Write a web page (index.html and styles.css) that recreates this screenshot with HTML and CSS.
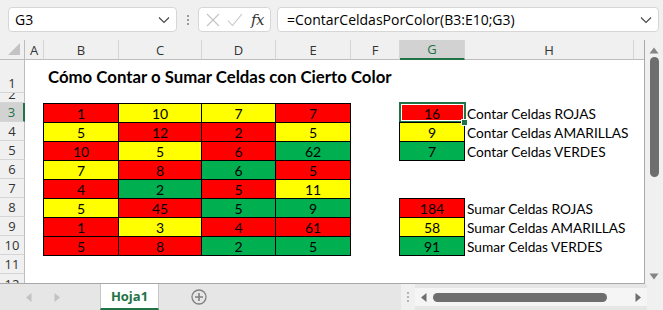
FILE: index.html
```html
<!DOCTYPE html>
<html lang="es">
<head>
    <meta charset="UTF-8">
    <title>Contar Celdas por Color</title>
    <link rel="stylesheet" href="styles.css">
</head>
<body>
<div class="app">
    <div class="formula-bar">
        <div class="name-box">
            <span>G3</span>
            <svg class="chev" width="12" height="8" viewBox="0 0 12 8"><path d="M1 1.5 L6 6.5 L11 1.5" fill="none" stroke="#444" stroke-width="1.1"/></svg>
        </div>
        <div class="grip"><i></i><i></i><i></i></div>
        <div class="fx-box">
            <svg width="14" height="14" viewBox="0 0 14 14"><path d="M1 1 L13 13 M13 1 L1 13" stroke="#c4c4c4" stroke-width="1.1"/></svg>
            <svg width="16" height="14" viewBox="0 0 16 14"><path d="M1 7.5 L5.5 12.5 L15 1" fill="none" stroke="#c4c4c4" stroke-width="1.1"/></svg>
            <span class="fx">fx</span>
        </div>
        <div class="formula">
            <span>=ContarCeldasPorColor(B3:E10;G3)</span>
            <svg class="chev" width="12" height="8" viewBox="0 0 12 8"><path d="M1 1.5 L6 6.5 L11 1.5" fill="none" stroke="#444" stroke-width="1.1"/></svg>
        </div>
    </div>

    <div class="sheet-area">
        <div class="sheet">
            <div class="row head">
                <div class="corner"><svg width="14" height="14" viewBox="0 0 14 14"><path d="M13 1 L13 13 L1 13 Z" fill="#c3c3c3"/></svg></div>
                <div class="ch">A</div><div class="ch">B</div><div class="ch">C</div><div class="ch">D</div>
                <div class="ch">E</div><div class="ch">F</div><div class="ch active">G</div><div class="ch">H</div><div class="ch"></div>
            </div>

            <div class="row r1">
                <div class="rh">1</div><div></div>
                <div class="title">Cómo Contar o Sumar Celdas con Cierto Color</div>
                <div></div><div></div><div></div><div></div><div></div><div></div><div></div>
            </div>
            <div class="row r2">
                <div class="rh clip"><span>2</span></div><div></div><div></div><div></div><div></div><div></div><div></div><div></div><div></div><div></div>
            </div>
            <div class="row">
                <div class="rh active">3</div><div></div>
                <div class="c red">1</div><div class="c yel">10</div><div class="c yel">7</div><div class="c red">7</div>
                <div></div><div class="c red sel">16</div><div class="lbl">Contar Celdas ROJAS</div><div></div>
            </div>
            <div class="row">
                <div class="rh">4</div><div></div>
                <div class="c yel">5</div><div class="c red">12</div><div class="c red">2</div><div class="c yel">5</div>
                <div></div><div class="c yel">9</div><div class="lbl">Contar Celdas AMARILLAS</div><div></div>
            </div>
            <div class="row">
                <div class="rh">5</div><div></div>
                <div class="c red">10</div><div class="c yel">5</div><div class="c red">6</div><div class="c grn">62</div>
                <div></div><div class="c grn">7</div><div class="lbl">Contar Celdas VERDES</div><div></div>
            </div>
            <div class="row">
                <div class="rh">6</div><div></div>
                <div class="c yel">7</div><div class="c red">8</div><div class="c grn">6</div><div class="c red">5</div>
                <div></div><div></div><div></div><div></div>
            </div>
            <div class="row">
                <div class="rh">7</div><div></div>
                <div class="c red">4</div><div class="c grn">2</div><div class="c red">5</div><div class="c yel">11</div>
                <div></div><div></div><div></div><div></div>
            </div>
            <div class="row">
                <div class="rh">8</div><div></div>
                <div class="c yel">5</div><div class="c red">45</div><div class="c grn">5</div><div class="c grn">9</div>
                <div></div><div class="c red">184</div><div class="lbl">Sumar Celdas ROJAS</div><div></div>
            </div>
            <div class="row">
                <div class="rh">9</div><div></div>
                <div class="c red">1</div><div class="c yel">3</div><div class="c red">4</div><div class="c red">61</div>
                <div></div><div class="c yel">58</div><div class="lbl">Sumar Celdas AMARILLAS</div><div></div>
            </div>
            <div class="row">
                <div class="rh">10</div><div></div>
                <div class="c red">5</div><div class="c red">8</div><div class="c grn">2</div><div class="c grn">5</div>
                <div></div><div class="c grn">91</div><div class="lbl">Sumar Celdas VERDES</div><div></div>
            </div>
            <div class="row">
                <div class="rh">11</div><div></div><div></div><div></div><div></div><div></div><div></div><div></div><div></div><div></div>
            </div>
            <div class="row r12">
                <div class="rh clip"><span>12</span></div><div></div><div></div><div></div><div></div><div></div><div></div><div></div><div></div><div></div>
            </div>
        </div>

        <div class="vscroll">
            <svg width="10" height="7" viewBox="0 0 10 7"><path d="M0.5 6.5 L5 0.5 L9.5 6.5 Z" fill="#858585"/></svg>
            <div class="vthumb-track"><div class="vthumb"></div></div>
            <svg width="10" height="7" viewBox="0 0 10 7"><path d="M0.5 0.5 L5 6.5 L9.5 0.5 Z" fill="#858585"/></svg>
        </div>
    </div>

    <div class="tabs">
        <div class="nav">
            <svg width="6" height="9" viewBox="0 0 6 9"><path d="M5.5 0 L0 4.5 L5.5 9 Z" fill="#c2c2c2"/></svg>
            <svg width="6" height="9" viewBox="0 0 6 9"><path d="M0.5 0 L6 4.5 L0.5 9 Z" fill="#c2c2c2"/></svg>
        </div>
        <div class="tab">Hoja1</div>
        <div class="add">
            <svg width="16" height="16" viewBox="0 0 16 16"><circle cx="8" cy="8" r="7" fill="none" stroke="#808080" stroke-width="1.3"/><path d="M8 4 V12 M4 8 H12" stroke="#808080" stroke-width="1.6"/></svg>
        </div>
        <div class="spacer"></div>
        <div class="grip small"><i></i><i></i><i></i></div>
        <div class="hscroll">
            <svg width="6" height="9" viewBox="0 0 6 9"><path d="M5.5 0 L0 4.5 L5.5 9 Z" fill="#6e6e6e"/></svg>
            <div class="hthumb"></div>
            <svg width="6" height="9" viewBox="0 0 6 9"><path d="M0.5 0 L6 4.5 L0.5 9 Z" fill="#6e6e6e"/></svg>
        </div>
        <div class="tab-corner"></div>
    </div>
</div>
</body>
</html>
```

FILE: styles.css
```css
/* Base */
body {
    margin: 0;
    font-family: "Open Sans", "Noto Sans", sans-serif;
    color: #000;
}

.app {
    width: 663px;
    height: 310px;
    background-color: #f0f0f0;
    display: flex;
    flex-direction: column;
    overflow: hidden;
}

/* Formula bar */
.formula-bar {
    height: 40px;
    display: flex;
    align-items: flex-start;
    padding: 7px 4px 0 8px;
    box-sizing: border-box;
    flex-shrink: 0;
}

.name-box,
.fx-box,
.formula {
    height: 25px;
    box-sizing: border-box;
    background-color: #fff;
    border: 1px solid #d6d6d6;
    border-radius: 4px;
    display: flex;
    align-items: center;
}

.name-box {
    width: 169px;
    padding: 0 6px 0 6px;
    font-size: 14px;
    justify-content: space-between;
}

.grip {
    width: 21px;
    height: 25px;
    display: flex;
    flex-direction: column;
    align-items: center;
    justify-content: center;
    gap: 2px;
}

.grip i {
    width: 2px;
    height: 2px;
    background-color: #9a9a9a;
}

.fx-box {
    width: 73px;
    padding: 0 6px 0 7px;
    gap: 7px;
}

.fx {
    font-family: "DejaVu Serif", "Liberation Serif", serif;
    font-style: italic;
    font-size: 15px;
    color: #333;
    margin-left: 1px;
    letter-spacing: -0.5px;
}

.formula {
    width: 382px;
    margin-left: 6px;
    padding: 0 6px 0 9px;
    font-size: 14px;
    justify-content: space-between;
}

/* Sheet */
.sheet-area {
    height: 244px;
    display: flex;
    flex-shrink: 0;
}

.sheet {
    width: 645px;
    background-color: #fff;
    border-right: 1px solid #a8a8a8;
    border-bottom: 1px solid #a8a8a8;
    box-sizing: border-box;
    display: flex;
    flex-direction: column;
    overflow: hidden;
}

.row {
    display: grid;
    grid-template-columns: 25px 19px 75px 83px 74px 75px 49px 65px 169px 11px;
    height: 19px;
    flex-shrink: 0;
}

.row.head {
    height: 20px;
    background-color: #f0f0f0;
}

.row.r1 { height: 33px; }
.row.r2 { height: 10px; }
.row.r12 { height: 10px; }

.corner {
    display: flex;
    align-items: flex-end;
    justify-content: flex-end;
    padding: 0 3px 3px 0;
    border-right: 1px solid #bdbdbd;
    border-bottom: 1px solid #bdbdbd;
    background-color: #f0f0f0;
}

.ch {
    border-right: 1px solid #d5d5d5;
    border-bottom: 1px solid #bdbdbd;
    font-size: 13px;
    color: #333;
    display: flex;
    align-items: center;
    justify-content: center;
}

.ch.active {
    background-color: #d2d2d2;
    color: #217346;
    border-bottom: 2px solid #217346;
}

.rh {
    background-color: #f0f0f0;
    border-right: 1px solid #bdbdbd;
    border-bottom: 1px solid #d5d5d5;
    font-size: 13px;
    color: #333;
    display: flex;
    align-items: flex-end;
    justify-content: center;
    line-height: 18px;
    overflow: hidden;
}

/* short rows show only a sliver of their number */
.rh.clip {
    align-items: flex-start;
    line-height: 9px;
}

.rh.clip span {
    display: block;
    height: 9px;
    overflow: hidden;
    line-height: 9px;
    transform: translateY(-3px);
}

.r12 .rh.clip span {
    transform: translateY(6px);
}

.r12 .rh.clip {
    border-bottom: none;
}

.rh.active {
    background-color: #d2d2d2;
    color: #217346;
    border-right: 2px solid #217346;
}

.title {
    font-family: Lato, "Open Sans", sans-serif;
    font-weight: bold;
    font-size: 16.8px;
    white-space: nowrap;
    display: flex;
    align-items: flex-end;
    padding: 0 0 6px 4px;
}

/* Data cells */
.c {
    font-family: Lato, "Liberation Sans", sans-serif;
    font-size: 14px;
    line-height: 17px;
    border: 1px solid #000;
    margin: 0 0 -1px -1px;
    display: flex;
    align-items: flex-end;
    justify-content: center;
    position: relative;
}

.red { background-color: #ff0000; }
.yel { background-color: #ffff00; }
.grn { background-color: #00b050; }

.sel::after {
    content: "";
    position: absolute;
    inset: -2px -2px -1px -1px;
    border: 2px solid #217346;
    box-shadow: inset 0 0 0 1px #fff;
}

.sel::before {
    content: "";
    position: absolute;
    right: -4px;
    bottom: -4px;
    width: 5px;
    height: 5px;
    background-color: #217346;
    border: 1px solid #fff;
    z-index: 2;
}

.lbl {
    font-family: Lato, "Liberation Sans", sans-serif;
    font-size: 13.7px;
    line-height: 17px;
    white-space: nowrap;
    padding-left: 2px;
    display: flex;
    align-items: flex-end;
}

/* Vertical scroll */
.vscroll {
    width: 18px;
    display: flex;
    flex-direction: column;
    align-items: center;
    padding: 7px 0 4px;
    box-sizing: border-box;
}

.vthumb-track {
    flex: 1;
    width: 100%;
    display: flex;
    justify-content: center;
    padding-top: 3px;
}

.vthumb {
    width: 9px;
    height: 120px;
    background-color: #6e6e6e;
    border-radius: 5px;
}

/* Sheet tabs */
.tabs {
    height: 26px;
    display: flex;
    align-items: stretch;
    background-color: #e6e6e6;
}

.nav {
    width: 100px;
    display: flex;
    align-items: center;
    gap: 22px;
    padding-left: 26px;
    box-sizing: border-box;
}

.tab {
    width: 59px;
    background-color: #fff;
    border-left: 1px solid #c6c6c6;
    border-right: 1px solid #c6c6c6;
    border-bottom: 2px solid #217346;
    color: #217346;
    font-weight: bold;
    font-size: 13px;
    display: flex;
    align-items: center;
    justify-content: center;
    box-sizing: border-box;
}

.add {
    width: 80px;
    display: flex;
    align-items: center;
    justify-content: center;
}

.spacer { flex: 1; }

.grip.small {
    height: auto;
    width: 14px;
    background-color: #f0f0f0;
}

.grip.small i { background-color: #b3b3b3; }

.hscroll {
    width: 232px;
    margin: 4px 0;
    background-color: #f5f5f5;
    display: flex;
    align-items: center;
    padding: 0 6px;
    gap: 6px;
    box-sizing: border-box;
}

.hthumb {
    flex: 1;
    height: 9px;
    background-color: #6e6e6e;
    border-radius: 5px;
    margin-right: 22px;
}

.tab-corner {
    width: 16px;
    background-color: #f0f0f0;
}
```
